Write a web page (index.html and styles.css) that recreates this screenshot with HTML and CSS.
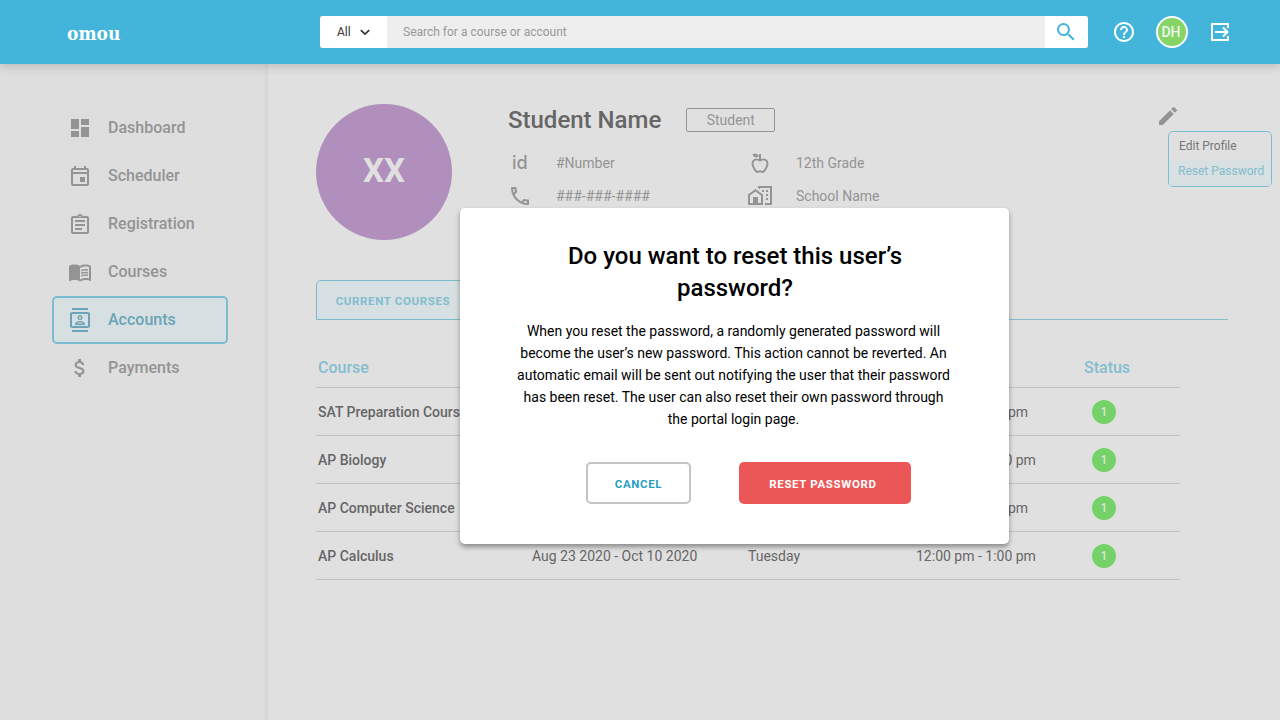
FILE: index.html
```
<!DOCTYPE html>
<html lang="en">
<head>
<meta charset="utf-8">
<title>omou - Accounts</title>
<link rel="stylesheet" href="styles.css">
</head>
<body>
<header class="topbar">
  <div class="logo">omou</div>
  <div class="search">
    <div class="search-scope">All
      <svg width="10" height="7" viewBox="0 0 10 7" fill="none" stroke="#333" stroke-width="1.7"><path d="M.8 1.2 5 5.2 9.2 1.2"/></svg>
    </div>
    <div class="search-input">Search for a course or account</div>
    <div class="search-button"><svg class="icon" viewBox="0 0 24 24"><path d="M15.5 14h-.79l-.28-.27A6.471 6.471 0 0 0 16 9.5 6.5 6.5 0 1 0 9.5 16c1.61 0 3.09-.59 4.23-1.57l.27.28v.79l5 4.99L20.49 19l-4.99-5zm-6 0C7.01 14 5 11.99 5 9.5S7.01 5 9.5 5 14 7.01 14 9.5 11.99 14 9.5 14z"/></svg></div>
  </div>
  <div class="actions">
    <svg class="icon" viewBox="0 0 24 24"><path d="M11 18h2v-2h-2v2zm1-16C6.48 2 2 6.48 2 12s4.48 10 10 10 10-4.48 10-10S17.52 2 12 2zm0 18c-4.41 0-8-3.59-8-8s3.59-8 8-8 8 3.59 8 8-3.59 8-8 8zm0-14c-2.21 0-4 1.79-4 4h2c0-1.1.9-2 2-2s2 .9 2 2c0 2-3 1.75-3 5h2c0-2.25 3-2.5 3-5 0-2.21-1.79-4-4-4z"/></svg>
    <div class="user">DH</div>
    <svg class="icon" viewBox="0 0 24 24" fill="none"><path d="M20 8V4H4v16h16v-4M7 12h12M15 7.500l4.500 4.500-4.500 4.500" fill="none" stroke="#fff" stroke-width="2" stroke-linejoin="round"/></svg>
  </div>
</header>

<div class="layout">
  <nav class="sidebar">
    <a class="nav-item"><svg class="icon" viewBox="0 0 24 24"><path d="M3 13h8V3H3v10zm0 8h8v-6H3v6zm10 0h8V11h-8v10zm0-18v6h8V3h-8z"/></svg><span>Dashboard</span></a>
    <a class="nav-item"><svg class="icon" viewBox="0 0 24 24"><path d="M19 4h-1V2h-2v2H8V2H6v2H5c-1.110 0-2 .9-2 2v14a2 2 0 0 0 2 2h14c1.100 0 2-.9 2-2V6c0-1.100-.9-2-2-2zm0 16H5V10h14v10zm0-12H5V6h14v2zM12 13h5v5h-5z"/></svg><span>Scheduler</span></a>
    <a class="nav-item"><svg class="icon" viewBox="0 -1 24 24"><path d="M7 15h7v2H7zm0-4h10v2H7zm0-4h10v2H7zm12-4h-4.180C14.400 1.840 13.300 1 12 1s-2.400.84-2.820 2H5c-1.100 0-2 .9-2 2v14c0 1.100.9 2 2 2h14c1.100 0 2-.9 2-2V5c0-1.100-.9-2-2-2zm-7-.25c.41 0 .75.34.75.75s-.34.750-.75.750-.75-.34-.75-.75.34-.75.75-.75zM19 19H5V5h14v14z"/></svg><span>Registration</span></a>
    <a class="nav-item"><svg class="icon" viewBox="0 0 24 24"><path d="M21 5c-1.11-.35-2.33-.5-3.5-.5-1.95 0-4.05.4-5.5 1.5-1.45-1.1-3.55-1.5-5.5-1.5S2.45 4.9 1 6v14.65c0 .25.25.5.5.5.1 0 .15-.05.25-.05C3.1 20.45 5.05 20 6.5 20c1.95 0 4.05.4 5.5 1.5 1.35-.85 3.8-1.5 5.5-1.5 1.65 0 3.35.3 4.75 1.05.1.05.15.05.25.05.25 0 .5-.25.5-.5V6c-.6-.45-1.25-.75-2-1zm0 13.5c-1.1-.35-2.3-.5-3.5-.5-1.7 0-4.15.65-5.5 1.5V8c1.35-.85 3.8-1.5 5.5-1.5 1.2 0 2.4.15 3.5.5v11.5z"/><path d="M17.5 10.5c.88 0 1.73.09 2.5.26V9.24c-.79-.15-1.64-.24-2.5-.24-1.7 0-3.24.29-4.5.83v1.66c1.13-.64 2.7-.99 4.5-.99zM13 12.49v1.66c1.13-.64 2.7-.99 4.5-.99.88 0 1.73.09 2.5.26V11.9c-.79-.15-1.64-.24-2.5-.24-1.7 0-3.24.3-4.5.83zm4.5 1.84c-1.7 0-3.24.29-4.5.83v1.66c1.13-.64 2.7-.99 4.5-.99.88 0 1.73.09 2.5.26v-1.52c-.79-.16-1.64-.24-2.5-.24z"/></svg><span>Courses</span></a>
    <a class="nav-item active"><svg class="icon" viewBox="0 0 24 24"><path d="M20 4H4c-1.1 0-2 .9-2 2v12c0 1.1.9 2 2 2h16c1.1 0 2-.9 2-2V6c0-1.1-.9-2-2-2zm0 14H4V6h16v12zM4 0h16v2H4zm0 22h16v2H4zm8-10a2.5 2.5 0 0 0 0-5 2.5 2.5 0 0 0 0 5zm0-3.500c.55 0 1 .45 1 1s-.45 1-1 1-1-.45-1-1 .45-1 1-1zm5 7.500c0-2.100-3.310-3-5-3s-5 .9-5 3v1h10v-1zm-8.190-.5c.61-.52 2.030-1 3.190-1 1.170 0 2.590.48 3.200 1H8.810z"/></svg><span>Accounts</span></a>
    <a class="nav-item"><svg class="icon" viewBox="0 0 24 24"><path d="M11.8 10.9c-2.27-.59-3-1.2-3-2.15 0-1.09 1.01-1.85 2.7-1.85 1.78 0 2.44.85 2.5 2.1h2.21c-.07-1.72-1.12-3.3-3.21-3.81V3h-3v2.16c-1.94.42-3.5 1.68-3.5 3.61 0 2.31 1.91 3.46 4.7 4.13 2.5.6 3 1.48 3 2.41 0 .69-.49 1.79-2.7 1.79-2.06 0-2.87-.92-2.98-2.1h-2.2c.12 2.19 1.76 3.42 3.68 3.83V21h3v-2.15c1.95-.37 3.5-1.5 3.5-3.55 0-2.84-2.43-3.81-4.7-4.4z"/></svg><span>Payments</span></a>
  </nav>

  <main class="content">
    <section class="profile">
      <div class="avatar">XX</div>
      <div class="info">
        <div class="title-row"><h1>Student Name</h1><span class="role">Student</span></div>
        <div class="facts">
          <span class="id-mark">id</span><span>#Number</span>
          <svg class="icon" viewBox="0 0 24 24"><path d="M11.200 9.200C9 8 6.500 8.300 5 10.300c-1.600 3 1.400 9.200 3.900 10.600 1.200.5 1.900-.8 3.100-.8s1.900 1.300 3.100.8c2.500-1.400 5.500-7.600 3.900-10.600-1.500-2-4-2.300-6.200-1.100z" fill="none" stroke="currentColor" stroke-width="1.900"/><path d="M11 3h2v6h-2zM4.400 3.600C6.500 1.600 9.500 2.300 11 5.200 8 7 5.300 6.300 4.400 3.600z"/></svg>
          <span>12th Grade</span>
          <svg class="icon" viewBox="0 0 24 24"><path d="M6.54 5c.06.89.21 1.76.45 2.59l-1.2 1.2c-.41-1.2-.67-2.47-.76-3.79h1.51m9.86 12.02c.85.24 1.72.39 2.6.45v1.490c-1.32-.09-2.59-.35-3.8-.75l1.2-1.190M7.5 3H4c-.55 0-1 .45-1 1 0 9.390 7.610 17 17 17 .55 0 1-.45 1-1v-3.490c0-.55-.45-1-1-1-1.240 0-2.450-.2-3.570-.57-.1-.04-.21-.05-.31-.05-.26 0-.51.1-.71.290l-2.200 2.200c-2.830-1.450-5.150-3.760-6.590-6.590l2.200-2.200c.28-.28.36-.67.25-1.020C8.700 6.450 8.500 5.250 8.500 4c0-.55-.45-1-1-1z"/></svg>
          <span>###-###-####</span>
          <svg class="icon" viewBox="0 0 24 24"><path d="M10 2h14v19h-7v-2h5V4H12v1.200L10 4z"/><path d="M1 20V11l6.500-4.700L14 11v9z" fill="none" stroke="currentColor" stroke-width="2"/><path d="M5 13h5v8H5zM14 6h2v2h-2zM18 6h2v2h-2zM18 10h2v2h-2zM18 14h2v2h-2z"/></svg>
          <span>School Name</span>
        </div>
      </div>
      <div class="edit">
        <svg class="icon" viewBox="0 0 24 24"><path d="M3 17.25V21h3.750L17.810 9.940l-3.750-3.750L3 17.250zM20.710 7.040a1 1 0 0 0 0-1.410l-2.340-2.340a1 1 0 0 0-1.410 0l-1.830 1.830 3.750 3.750 1.830-1.830z"/></svg>
        <div class="menu"><div class="menu-item">Edit Profile</div><div class="menu-item selected">Reset Password</div></div>
      </div>
    </section>

    <div class="tabs"><div class="tab">CURRENT COURSES</div></div>

    <section class="table">
      <div class="row head"><span>Course</span><span></span><span></span><span></span><span>Status</span></div>
      <div class="row"><b>SAT Preparation Cours</b><span></span><span></span><span>4:00 pm - 5:00 pm</span><i class="badge">1</i></div>
      <div class="row"><b>AP Biology</b><span></span><span></span><span>12:00 pm - 1:00 pm</span><i class="badge">1</i></div>
      <div class="row"><b>AP Computer Science</b><span></span><span></span><span>4:00 pm - 5:00 pm</span><i class="badge">1</i></div>
      <div class="row"><b>AP Calculus</b><span>Aug 23 2020 - Oct 10 2020</span><span>Tuesday</span><span>12:00 pm - 1:00 pm</span><i class="badge">1</i></div>
    </section>
  </main>
</div>

<div class="dialog">
  <h2>Do you want to reset this user’s<br>password?</h2>
  <p>When you reset the password, a randomly generated password will<br>become the user’s new password. This action cannot be reverted. An<br>automatic email will be sent out notifying the user that their password<br>has been reset. The user can also reset their own password through<br>the portal login page.</p>
  <div class="buttons"><button class="btn cancel">CANCEL</button><button class="btn danger">RESET PASSWORD</button></div>
</div>
</body>
</html>
```
FILE: styles.css
```
* { box-sizing: border-box; }
body { margin: 0; width: 1280px; height: 720px; overflow: hidden; background: #e0e0e0; font-family: Roboto, sans-serif; position: relative; display: flex; flex-direction: column; }
h1, h2, p { margin: 0; }
.icon { width: 24px; height: 24px; fill: currentColor; display: block; flex: none; }

.topbar { height: 64px; flex: none; background: #43b5da; display: flex; align-items: center; position: relative; z-index: 1; box-shadow: 0 2px 10px rgba(0,0,0,.18); }
.logo { width: 253px; margin-left: 67px; padding-top: 1px; color: #fff; font: bold 19px/24px "DejaVu Serif Condensed", "DejaVu Serif", serif; font-stretch: condensed; letter-spacing: 0; }
.search { width: 768px; height: 32px; display: flex; border-radius: 3px; overflow: hidden; background: #eee; font-size: 12px; }
.search-scope { width: 67px; background: #fff; border-radius: 0 2px 2px 0; color: #333; display: flex; align-items: center; gap: 9px; padding-left: 17px; }
.search-input { flex: 1; padding-left: 16px; line-height: 32px; color: #999; }
.search-button { width: 43px; background: #fff; color: #43b5da; padding: 4px 9px; }
.actions { display: flex; align-items: center; gap: 20px; margin-left: 24px; color: #fff; }
.user { width: 32px; height: 32px; border: 2px solid #fff; border-radius: 50%; background: #84d565; font-size: 14px; font-weight: 500; line-height: 29px; text-align: center; padding-right: 2px; color: #f4f4f4; }

.layout { flex: 1; display: flex; }
.sidebar { width: 268px; background: #dedede; padding: 40px 40px 0 52px; box-shadow: inset -4px 0 5px -3px rgba(0,0,0,.06); }
.nav-item { display: flex; align-items: center; gap: 16px; height: 48px; padding-left: 16px; font-size: 16px; font-weight: 500; color: #949494; }
.nav-item span { padding-bottom: 2px; }
.nav-item.active { border: 2px solid #7cbad0; border-radius: 5px; background: #d6dfe1; color: #6ba4b7; padding-left: 14px; }

.content { flex: 1; padding: 40px 52px 0 48px; color: #949494; }
.profile { display: flex; height: 176px; }
.avatar { width: 136px; height: 136px; border-radius: 50%; background: #b08fbd; color: #e0e0e0; font-size: 33px; font-weight: 700; line-height: 134px; text-align: center; }
.info { margin-left: 56px; flex: 1; }
.title-row { display: flex; align-items: center; height: 32px; gap: 25px; }
h1 { font-size: 24px; font-weight: 500; color: #666; line-height: 32px; }
.role { width: 89px; height: 24px; border: 1px solid #949494; border-radius: 2px; font-size: 14px; line-height: 23px; text-align: center; }
.facts { display: grid; grid-template-columns: 48px 192px 48px 1fr; grid-auto-rows: 33px; align-items: center; padding-top: 10px; font-size: 14px; }
.id-mark { font: 500 18px/24px Inter, sans-serif; padding-left: 4px; }
.edit { width: 72px; position: relative; }
.menu { position: absolute; left: 12px; top: 27px; width: 104px; height: 56px; border: 1px solid #7cbdd3; border-radius: 5px; overflow: hidden; font-size: 12px; color: #777; }
.menu-item { height: 28px; padding-left: 10px; line-height: 28px; }
.menu-item.selected { background: #d8e0e2; color: #83bdcf; padding-left: 9px; line-height: 23px; }

.tabs { height: 40px; border-bottom: 1px solid #85bccd; }
.tab { width: 154px; height: 40px; padding-top: 1px; border: 1px solid #7cbad0; border-radius: 5px 5px 0 0; background: #d6dfe1; color: #83bdcf; font-size: 11.5px; font-weight: 700; letter-spacing: .65px; line-height: 39px; text-align: center; }

.table { width: 864px; margin-top: 28px; font-size: 14px; color: #666; }
.row { display: grid; grid-template-columns: 214px 216px 168px 168px 1fr; align-items: center; height: 48px; padding-left: 2px; border-bottom: 1px solid #c0c0c0; }
.row b { font-weight: 500; white-space: nowrap; }
.row.head { height: 40px; font-size: 16px; font-weight: 500; color: #83bdcf; }
.badge { width: 24px; height: 24px; margin-left: 8px; border-radius: 50%; background: #75d268; color: #e0e0e0; font: 500 12px/24px Roboto, sans-serif; text-align: center; }

.dialog { position: absolute; z-index: 2; left: 460px; top: 208px; width: 549px; height: 336px; background: #fff; border-radius: 5px; box-shadow: 0 3px 5px rgba(0,0,0,.38); color: #000; text-align: center; padding-top: 32px; }
h2 { font-size: 24px; font-weight: 500; line-height: 32px; padding-left: 1px; }
.dialog p { margin-top: 16px; padding-right: 2px; font-size: 14px; line-height: 22px; }
.buttons { display: flex; gap: 48px; margin: 32px 0 0 126px; }
.btn { height: 42px; padding: 2px 0 0; border-radius: 5px; font: 700 11.5px Roboto, sans-serif; letter-spacing: .65px; }
.cancel { width: 105px; border: 2px solid #c4c4c4; background: #fff; color: #289fc3; }
.danger { width: 172px; padding-right: 4px; border: 0; background: #eb5757; color: #fff; }
```
